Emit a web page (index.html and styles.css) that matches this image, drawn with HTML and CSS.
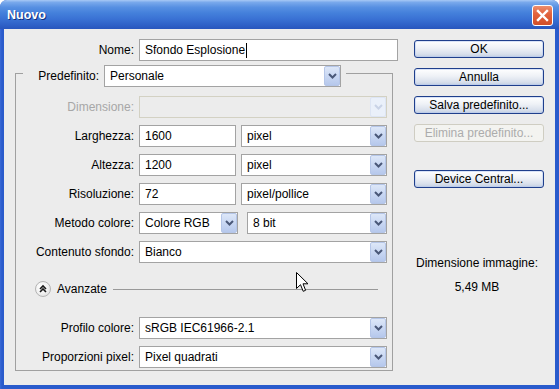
FILE: index.html
```html
<!DOCTYPE html>
<html lang="it">
<head>
<meta charset="utf-8">
<title>Nuovo</title>
<link rel="stylesheet" href="styles.css">
</head>
<body>
<div class="window">
  <div class="titlebar">
    <span class="title">Nuovo</span>
    <span class="close"><svg width="13" height="13" viewBox="0 0 13 13"><path d="M2 2 L11 11 M11 2 L2 11" stroke="#fff" stroke-width="2.4" stroke-linecap="square"/></svg></span>
  </div>
  <div class="frame">
    <div class="client">
      <div class="main">
        <div class="name-row">
          <span class="lbl">Nome:</span>
          <div class="field name-field">Sfondo Esplosione<span class="caret"></span></div>
        </div>
        <div class="group-head">
          <span class="corner"></span>
          <span class="head-label">Predefinito:</span>
          <div class="field combo head-combo"><span class="val">Personale</span><span class="dd"><svg width="9" height="6" viewBox="0 0 9 6"><path d="M1 1 L4.5 4.5 L8 1" fill="none" stroke="#4a5878" stroke-width="2"/></svg></span></div>
          <span class="head-line"></span>
        </div>
        <div class="group-body">
          <div class="frow">
            <span class="lbl dis">Dimensione:</span>
            <div class="field combo full disabled"><span class="val"></span><span class="dd"><svg width="9" height="6" viewBox="0 0 9 6"><path d="M1 1 L4.5 4.5 L8 1" fill="none" stroke="#c9d3e6" stroke-width="2"/></svg></span></div>
          </div>
          <div class="frow">
            <span class="lbl">Larghezza:</span>
            <div class="field num">1600</div>
            <div class="field combo unit"><span class="val">pixel</span><span class="dd"><svg width="9" height="6" viewBox="0 0 9 6"><path d="M1 1 L4.5 4.5 L8 1" fill="none" stroke="#4a5878" stroke-width="2"/></svg></span></div>
          </div>
          <div class="frow">
            <span class="lbl">Altezza:</span>
            <div class="field num">1200</div>
            <div class="field combo unit"><span class="val">pixel</span><span class="dd"><svg width="9" height="6" viewBox="0 0 9 6"><path d="M1 1 L4.5 4.5 L8 1" fill="none" stroke="#4a5878" stroke-width="2"/></svg></span></div>
          </div>
          <div class="frow">
            <span class="lbl">Risoluzione:</span>
            <div class="field num">72</div>
            <div class="field combo unit"><span class="val">pixel/pollice</span><span class="dd"><svg width="9" height="6" viewBox="0 0 9 6"><path d="M1 1 L4.5 4.5 L8 1" fill="none" stroke="#4a5878" stroke-width="2"/></svg></span></div>
          </div>
          <div class="frow">
            <span class="lbl">Metodo colore:</span>
            <div class="field combo mode"><span class="val">Colore RGB</span><span class="dd"><svg width="9" height="6" viewBox="0 0 9 6"><path d="M1 1 L4.5 4.5 L8 1" fill="none" stroke="#4a5878" stroke-width="2"/></svg></span></div>
            <div class="field combo bits"><span class="val">8 bit</span><span class="dd"><svg width="9" height="6" viewBox="0 0 9 6"><path d="M1 1 L4.5 4.5 L8 1" fill="none" stroke="#4a5878" stroke-width="2"/></svg></span></div>
          </div>
          <div class="frow">
            <span class="lbl">Contenuto sfondo:</span>
            <div class="field combo full"><span class="val">Bianco</span><span class="dd"><svg width="9" height="6" viewBox="0 0 9 6"><path d="M1 1 L4.5 4.5 L8 1" fill="none" stroke="#4a5878" stroke-width="2"/></svg></span></div>
          </div>
          <div class="adv-row">
            <span class="adv-btn"><svg width="16" height="16" viewBox="0 0 16 16"><path d="M5 8 L8 5 L11 8 M5 11 L8 8 L11 11" fill="none" stroke="#1a1a1a" stroke-width="1.6"/></svg></span>
            <span class="adv-label">Avanzate</span>
            <span class="adv-line"></span>
          </div>
          <div class="frow profile">
            <span class="lbl">Profilo colore:</span>
            <div class="field combo full"><span class="val">sRGB IEC61966-2.1</span><span class="dd"><svg width="9" height="6" viewBox="0 0 9 6"><path d="M1 1 L4.5 4.5 L8 1" fill="none" stroke="#4a5878" stroke-width="2"/></svg></span></div>
          </div>
          <div class="frow">
            <span class="lbl">Proporzioni pixel:</span>
            <div class="field combo full"><span class="val">Pixel quadrati</span><span class="dd"><svg width="9" height="6" viewBox="0 0 9 6"><path d="M1 1 L4.5 4.5 L8 1" fill="none" stroke="#4a5878" stroke-width="2"/></svg></span></div>
          </div>
        </div>
      </div>
      <div class="side">
        <button class="btn">OK</button>
        <button class="btn">Annulla</button>
        <button class="btn">Salva predefinito...</button>
        <button class="btn disabled-btn">Elimina predefinito...</button>
        <button class="btn device">Device Central...</button>
        <div class="info">
          <span>Dimensione immagine:</span>
          <span>5,49 MB</span>
        </div>
      </div>
    </div>
  </div>
  <svg class="cursor" width="13" height="21" viewBox="0 0 13 21"><path d="M0.5 0.5 L0.5 16.5 L4.5 12.7 L7.2 19.3 L9.6 18.3 L7 11.8 L12 11.8 Z" fill="#fff" stroke="#000" stroke-width="1"/></svg>
</div>
</body>
</html>
```

FILE: styles.css
```css
* { box-sizing: border-box; }
html, body { margin: 0; padding: 0; }
body {
  width: 559px;
  height: 389px;
  overflow: hidden;
  background: #ffffff;
  font-family: "Liberation Sans", Arial, sans-serif;
  font-size: 12px;
  color: #000;
}
.window {
  position: relative;
  width: 559px;
  height: 389px;
  display: flex;
  flex-direction: column;
  border-radius: 7px 7px 0 0;
  overflow: hidden;
  background: #2a5bcc;
}
.titlebar {
  height: 29px;
  flex: none;
  display: flex;
  align-items: center;
  justify-content: space-between;
  padding: 0 6px 0 7px;
  background: linear-gradient(to bottom, #a8c9f5 0%, #79a9ec 8%, #5790e2 25%, #4480db 45%, #3a72d4 65%, #2f62c8 85%, #2856bd 100%);
}
.title {
  color: #fff;
  font-weight: bold;
  font-size: 12.5px;
  text-shadow: 1px 1px 0 #13317e;
  padding-top: 1px;
}
.close {
  width: 21px;
  height: 21px;
  margin-top: 1px;
  border: 1px solid #fff;
  border-radius: 3px;
  background: linear-gradient(to bottom, #ec8e6e 0%, #e2643f 40%, #d14e28 100%);
  display: flex;
  align-items: center;
  justify-content: center;
}
.frame {
  flex: 1;
  display: flex;
  padding: 0 4px 4px 4px;
  background: linear-gradient(to right, #3a6ad6, #2a5bcc 2px);
}
.client {
  flex: 1;
  display: flex;
  background: #ececec;
}
.main {
  width: 395px;
  flex: none;
  padding: 10px 0 0 11px;
  display: flex;
  flex-direction: column;
}
.name-row {
  display: flex;
  align-items: center;
  gap: 5px;
  height: 22px;
}
.name-row .lbl { width: 119px; text-align: right; }
.field {
  height: 22px;
  border: 1px solid #a3a3a3;
  background: #fff;
  display: flex;
  align-items: center;
  padding-left: 5px;
  font-size: 12px;
  white-space: nowrap;
}
.name-field { width: 259px; }
.caret {
  display: inline-block;
  width: 1px;
  height: 15px;
  background: #000;
  margin-left: 1px;
}
.combo { padding-right: 0; justify-content: space-between; }
.combo .dd {
  width: 16px;
  height: 20px;
  border: 1px solid #b5c6e8;
  border-radius: 2px;
  background: linear-gradient(to bottom, #dde7f8 0%, #c7d6f2 55%, #b6c8ec 100%);
  display: flex;
  align-items: center;
  justify-content: center;
}
.group-head {
  display: flex;
  height: 22px;
  margin-top: 4px;
  width: 378px;
}
.corner {
  width: 8px;
  margin-top: 8px;
  border-top: 1px solid #a0a0a0;
  border-left: 1px solid #a0a0a0;
}
.head-label {
  width: 76px;
  text-align: right;
  line-height: 22px;
}
.head-combo { width: 237px; margin-left: 5px; }
.head-line {
  flex: 1;
  margin-left: 5px;
  margin-top: 8px;
  border-top: 1px solid #a0a0a0;
  border-right: 1px solid #a0a0a0;
}
.group-body {
  width: 378px;
  border: 1px solid #a0a0a0;
  border-top: 0;
  padding: 9px 5px 2px 0;
  display: flex;
  flex-direction: column;
  gap: 7px;
}
.frow {
  display: flex;
  align-items: center;
  gap: 5px;
  height: 22px;
}
.frow .lbl { width: 118px; text-align: right; flex: none; }
.lbl.dis { color: #a7a7a7; }
.full { width: 248px; }
.num { width: 97px; }
.unit { width: 146px; }
.mode { width: 99px; }
.bits { width: 140px; margin-left: 4px; }
.disabled { border-color: #d3d1c3; background: #ececec; }
.disabled .dd { border-color: #dde5f4; background: #eaf0fa; }
.adv-row {
  display: flex;
  align-items: center;
  height: 16px;
  margin-top: 11px;
  padding-left: 19px;
}
.adv-btn {
  width: 16px;
  height: 16px;
  border-radius: 50%;
  border: 1px solid #b4b4b4;
  background: radial-gradient(circle at 40% 35%, #ffffff 0%, #f2f2f2 50%, #d6d6d6 100%);
  display: flex;
  align-items: center;
  justify-content: center;
}
.adv-btn svg { margin: -1px; }
.adv-label { margin-left: 6px; }
.adv-line {
  flex: 1;
  height: 0;
  margin: 1px 9px 0 6px;
  border-top: 1px solid #999;
}
.profile { margin-top: 13px; }
.side {
  width: 130px;
  margin-left: 15px;
  padding-top: 11px;
  display: flex;
  flex-direction: column;
  gap: 10px;
}
.btn {
  height: 18px;
  padding: 0;
  font-family: "Liberation Sans", Arial, sans-serif;
  font-size: 12px;
  color: #000;
  border: 1px solid #1f3f8c;
  border-radius: 3px;
  background: linear-gradient(to bottom, #ffffff 0%, #eef1f6 45%, #d9e0ec 80%, #c3cfe2 100%);
  box-shadow: inset 0 0 0 1px rgba(180, 200, 240, 0.5);
  line-height: 16px;
  text-align: center;
}
.disabled-btn {
  border-color: #cfcdc2;
  background: #f3f3f0;
  color: #acacac;
  box-shadow: none;
}
.device { margin-top: 18px; }
.info {
  margin-top: 57px;
  display: flex;
  flex-direction: column;
  align-items: center;
  gap: 8px;
  line-height: 16px;
  padding-right: 4px;
}
.cursor {
  position: absolute;
  left: 296px;
  top: 272px;
}
```
